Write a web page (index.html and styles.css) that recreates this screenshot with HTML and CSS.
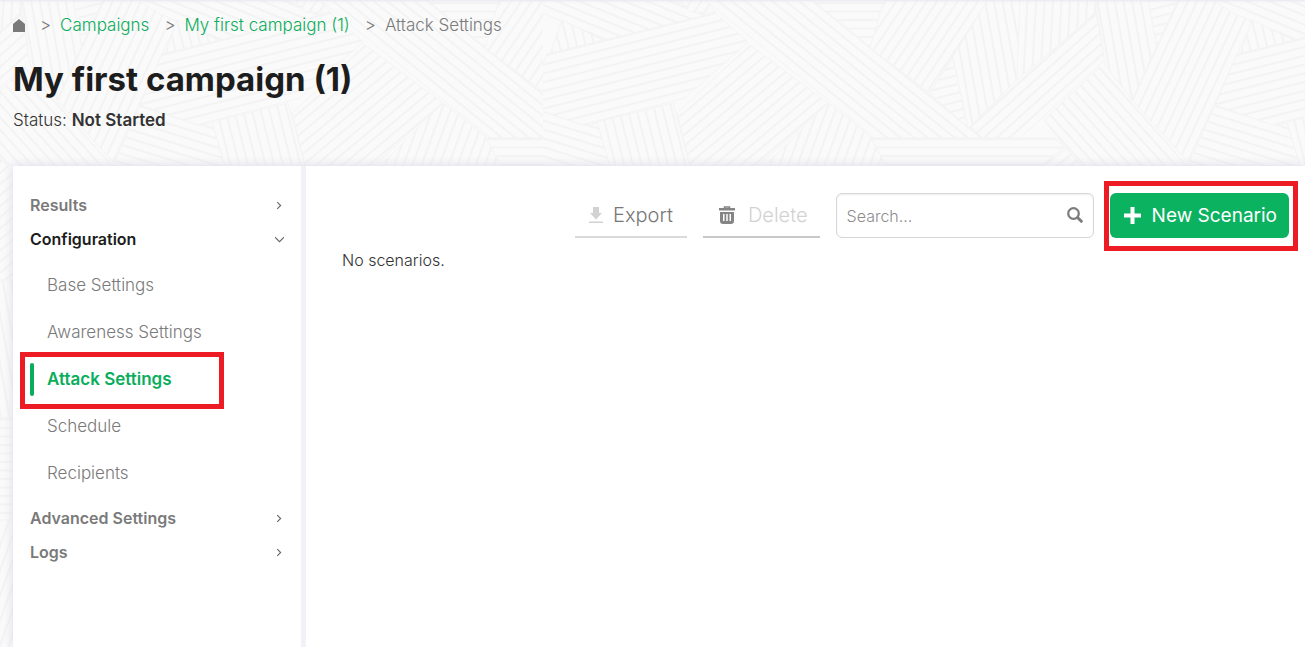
FILE: index.html
```html
<!DOCTYPE html>
<html lang="en">
<head>
<meta charset="utf-8">
<title>My first campaign (1)</title>
<link rel="stylesheet" href="styles.css">
</head>
<body>
<svg class="backdrop" aria-hidden="true">
  <defs>
    <pattern id="s0" width="8.5" height="8.5" patternUnits="userSpaceOnUse" patternTransform="translate(0 138)"><path class="fill" d="M0 0h9v9H0z"/><path class="line" d="M0 0h9v2H0z"/></pattern>
    <pattern id="s39" href="#s0" patternTransform="translate(705 0) rotate(39)"/>
    <pattern id="n56" href="#s0" patternTransform="translate(988 0) rotate(-56)"/>
    <pattern id="s80" href="#s0" patternTransform="translate(953 57) rotate(80)"/>
    <pattern id="s93" href="#s0" patternTransform="translate(1020 0) rotate(93)"/>
    <pattern id="n42" href="#s0" patternTransform="translate(970 126) rotate(-42)"/>
    <pattern id="n14" href="#s0" patternTransform="translate(547 54) rotate(-14)"/>
    <pattern id="n65" href="#s0" patternTransform="translate(1252 22) rotate(-65)"/>
    <pattern id="s48" href="#s0" patternTransform="translate(1100 67) rotate(48)"/>
    <pattern id="s22" href="#s0" patternTransform="translate(543 13) rotate(22)"/>
    <pattern id="s17" href="#s0" patternTransform="translate(525 105) rotate(17)"/>
    <pattern id="s76" href="#s0" patternTransform="translate(597 122) rotate(76)"/>
    <pattern id="n40" href="#s0" patternTransform="translate(750 45) rotate(-40)"/>
    <pattern id="n70" href="#s0" patternTransform="translate(828 103) rotate(-70)"/>
    <clipPath id="left"><path d="M0 0h543v3000H0z"/></clipPath>
    <clipPath id="right"><path d="M543 0h4000v3000H543z"/></clipPath>
    <g id="tile" class="patch">
      <path fill="url(#s0)" d="M805 0h80l-15 50z"/>
      <path fill="url(#s39)" d="M705 0H812L983 138H875z"/>
      <path fill="url(#n56)" d="M884 0H988L930 93L870 48z"/>
      <path fill="url(#n14)" d="M930 93L953 57L968 128z"/>
      <path fill="url(#s80)" d="M988 0H1020L1017 80L968 128L953 57z"/>
      <path fill="url(#s93)" d="M1020 0H1097V12L1017 80z"/>
      <path fill="url(#n42)" d="M1096 12L1105 60L1020 138H983L970 126z"/>
      <path fill="url(#s0)" d="M870 138H1054L1065 147L1040 166H886z"/>
      <path fill="url(#s80)" d="M1096 0H1148L1157 47L1132 100L1105 65z"/>
      <path fill="url(#n14)" d="M1148 0H1178L1157 47z"/>
      <path fill="url(#n65)" d="M1178 0H1213L1252 22L1188 162L1132 100z"/>
      <path fill="url(#s48)" d="M1100 67L1187 166H1080L1044 120z"/>
      <path fill="url(#n40)" d="M1040 166L1067 149L1110 200V280H1040z"/>
      <path fill="url(#s80)" d="M1040 280H1110V418H1040z"/>
      <path fill="url(#s0)" d="M1040 418H1110V520H1040z"/>
      <path fill="url(#n70)" d="M1040 520H1110V2000H1040z"/>
      <path fill="url(#s22)" d="M523 0H670L715 13L605 41L543 13z"/>
      <path fill="url(#s76)" d="M562 20L605 41L550 54z"/>
      <path fill="url(#n56)" d="M680 0H705L716 13L690 12z"/>
      <path fill="url(#n14)" d="M547 54L715 13L748 42L685 98L582 125L525 105z"/>
      <path fill="url(#s17)" d="M525 105L582 125L598 123L610 166H498z"/>
      <path fill="url(#s76)" d="M597 122L673 103L690 166H610z"/>
      <path fill="url(#n40)" d="M750 45L828 103L758 166H690L677 113z"/>
      <path fill="url(#n70)" d="M828 103L870 136L886 166H765z"/>
    </g>
  </defs>
  <g clip-path="url(#left)"><use href="#tile" x="-1075"/><use href="#tile" x="-385"/></g>
  <g clip-path="url(#right)"><use href="#tile"/><use href="#tile" x="690"/><use href="#tile" x="1380"/></g>
</svg>

<header class="header">
  <nav aria-label="Breadcrumb">
    <ol class="crumbs">
      <li><a class="home" href="#" aria-label="Home"><svg width="12" height="13" viewBox="0 0 12 13"><path fill="#7a7a7a" d="M6 0L12 5V13H0V5z"/></svg></a></li>
      <li><a href="#">Campaigns</a></li>
      <li><a href="#">My first campaign (1)</a></li>
      <li aria-current="page">Attack Settings</li>
    </ol>
  </nav>
  <h1 class="title">My first campaign (1)</h1>
  <p class="status">Status: <strong>Not Started</strong></p>
</header>

<div class="panel">
  <nav class="side" aria-label="Campaign">
    <a class="group" href="#">Results<svg class="chev" viewBox="0 0 8 8"><path d="M2 1l3 3-3 3"/></svg></a>
    <a class="group open" href="#">Configuration<svg class="chev" viewBox="0 0 8 8"><path d="M0 2l4 4 4-4"/></svg></a>
    <div class="sub">
      <a class="item" href="#">Base Settings</a>
      <a class="item" href="#">Awareness Settings</a>
      <a class="item active" href="#" aria-current="page">Attack Settings</a>
      <a class="item" href="#">Schedule</a>
      <a class="item" href="#">Recipients</a>
    </div>
    <a class="group" href="#">Advanced Settings<svg class="chev" viewBox="0 0 8 8"><path d="M2 1l3 3-3 3"/></svg></a>
    <a class="group" href="#">Logs<svg class="chev" viewBox="0 0 8 8"><path d="M2 1l3 3-3 3"/></svg></a>
  </nav>
  <main class="main">
    <div class="toolbar">
      <button class="tool" type="button">
        <svg width="14" height="16" viewBox="0 0 14 16"><path fill="#d2d2d2" d="M4 0h6v6h3L7 12.500L1 6h3zM0 14.500h14V16H0z"/></svg>Export</button>
      <button class="tool delete" type="button" disabled>
        <svg width="16" height="18" viewBox="0 0 16 18"><path fill="none" stroke="#858585" stroke-width="1.500" d="M5.500 3V1h5v2"/><path fill="#858585" fill-rule="evenodd" d="M0 2h16v2.500H0zM1 6h14v9q0 3-3 3H4q-3 0-3-3zM4 8v7h1.500V8zM7.250 8v7h1.500V8zM10.500 8v7H12V8z"/></svg>Delete</button>
      <div class="search">
        <input type="search" placeholder="Search..." aria-label="Search">
        <svg width="16" height="16" viewBox="0 0 16 16"><g fill="none" stroke="#7c7c7c"><circle cx="6.500" cy="6.500" r="5.300" stroke-width="2.200"/><path stroke-width="3" stroke-linecap="round" d="M11 11l3.300 3.300"/></g></svg>
      </div>
      <div class="marked">
        <button class="primary" type="button"><svg width="17" height="17" viewBox="0 0 17 17"><path fill="#fff" d="M6.500 0h4v6.500H17v4h-6.500V17h-4v-6.500H0v-4h6.500z"/></svg>New Scenario</button>
      </div>
    </div>
    <p class="empty">No scenarios.</p>
  </main>
</div>
</body>
</html>
```
FILE: styles.css
```css
*, *::before, *::after { box-sizing: border-box; }
body {
  margin: 0;
  min-height: 100vh;
  display: flex;
  flex-direction: column;
  background: #fafafa;
  color: #333;
  font: 300 16px/20px Inter, "Liberation Sans", sans-serif;
  overflow-x: hidden;
}
a { color: inherit; text-decoration: none; }
button, input { font: inherit; }

.backdrop {
  position: absolute;
  inset: 0;
  width: 100%;
  height: 100%;
  z-index: -1;
}
.fill { fill: #fafafa; }
.line { fill: #f3f3f3; }
.patch { stroke: #f4f4f4; stroke-width: 1px; }
.patch pattern { stroke: none; }

.header {
  height: 166px;
  padding: 15px 13px 0;
  box-shadow: inset 0 3px 3px -2px #e6e6f2;
}
.crumbs {
  display: flex;
  margin: 0;
  padding: 0;
  list-style: none;
  color: #7a7a7a;
  font-size: 17px;
}
.crumbs li { display: flex; align-items: center; }
.crumbs li + li::before { content: ">"; margin: 0 9px 0 15px; }
.crumbs a { color: #0aad5c; }
.home svg { display: block; }
.title {
  margin: 24px 0 0;
  color: #1d1d1d;
  font-size: 33px;
  line-height: 40px;
  font-weight: 700;
}
.status { margin: 11px 0 0; font-size: 17px; }
.status strong { font-weight: 600; }

.panel {
  flex: 1;
  display: flex;
  margin-left: 13px;
  background: #fff;
  box-shadow: 0 0 10px #d9d9ea;
}
.side {
  flex: 0 0 293px;
  padding: 22px 17px 0;
  border-right: 5px solid #f1f1f7;
}
.group {
  display: flex;
  align-items: center;
  justify-content: space-between;
  height: 34px;
  color: #7a7a7a;
  font-weight: 600;
}
.group.open { color: #1d1d1d; }
.chev {
  width: 9px;
  height: 9px;
  fill: none;
  stroke: #666;
  stroke-width: 1px;
}
.sub { padding: 5px 0; }
.item {
  position: relative;
  display: flex;
  align-items: center;
  height: 47px;
  padding-left: 17px;
  color: #7a7a7a;
  font-size: 17px;
}
.item.active {
  color: #0aad5c;
  font-weight: 600;
}
.item.active::before {
  content: "";
  position: absolute;
  left: 0;
  top: 8px;
  width: 4px;
  height: 33px;
  border-radius: 2px;
  background: #0aad5c;
}
.item.active::after {
  content: "";
  position: absolute;
  left: -10px;
  top: -3px;
  width: 204px;
  height: 57px;
  border: 5px solid #ed1c24;
}

.main { flex: 1; min-width: 0; padding: 27px 16px 0 36px; }
.toolbar {
  display: flex;
  justify-content: flex-end;
  gap: 16px;
  height: 45px;
}
.tool {
  display: flex;
  align-items: center;
  gap: 10px;
  padding: 0 14px;
  border: 0;
  border-bottom: 2px solid #dadada;
  background: none;
  color: #777;
  font-size: 20px;
}
.delete {
  gap: 13px;
  padding-left: 16px;
  padding-right: 12px;
  border-color: #c8c8c8;
  color: #d2d2d2;
}
.search { position: relative; width: 258px; }
.search input {
  width: 100%;
  height: 100%;
  padding: 0 40px 0 10px;
  border: 1px solid #d6d6d6;
  border-radius: 6px;
  background: #fff;
  box-shadow: inset 0 1px 2px #eee;
  outline: 0;
}
.search input::placeholder { color: #8c8c8c; }
.search svg { position: absolute; right: 11px; top: 14px; }
.marked { position: relative; display: flex; }
.marked::after {
  content: "";
  position: absolute;
  inset: -12px -9px -13px -6px;
  border: 5px solid #ed1c24;
  pointer-events: none;
}
.primary {
  display: flex;
  align-items: center;
  gap: 11px;
  padding: 0 12px 0 14px;
  border: 0;
  border-radius: 6px;
  background: #0bb260;
  color: #fff;
  font-size: 19px;
  font-weight: 400;
}
.empty { margin: 12px 0 0; }
```
